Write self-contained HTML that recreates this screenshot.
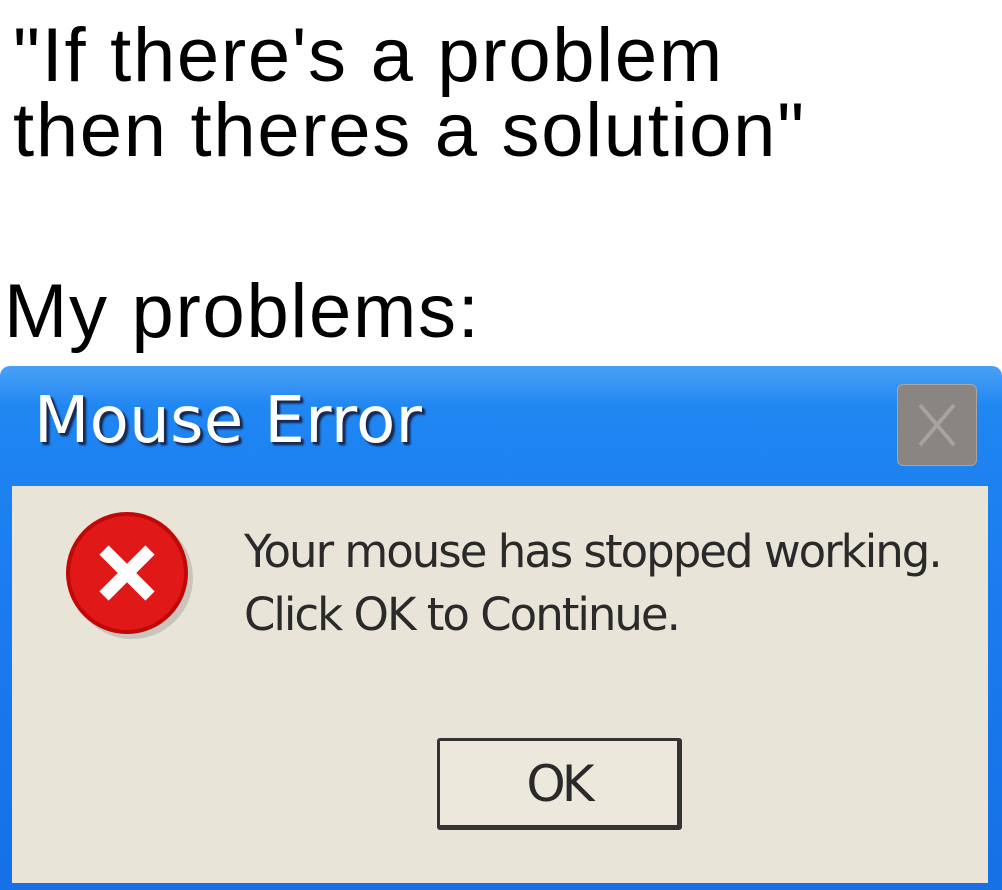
<!DOCTYPE html>
<html><head><meta charset="utf-8"><style>
html,body{margin:0;padding:0;background:#fff;width:1002px;height:890px;overflow:hidden;position:relative}
.t{position:absolute;font-family:"Liberation Sans",sans-serif;color:#000;font-size:76px;line-height:75px;white-space:nowrap;letter-spacing:1.7px}
.win{position:absolute;left:0;top:366px;width:1002px;height:524px;background:linear-gradient(#4aa0f5,#1f86f2 8%,#1a7aee 50%,#1670e6);border-radius:10px 10px 0 0}
.title{position:absolute;left:34px;top:386px;font-family:"DejaVu Sans","Liberation Sans",sans-serif;font-size:64px;line-height:70px;color:#fff;letter-spacing:0.4px;text-shadow:2px 2px 1px #1a2a50,3px 3px 2px #10204a}
.close{position:absolute;left:897px;top:384px;width:78px;height:80px;background:#8a8580;border-radius:6px;border:1px solid #a9a5a0}
.client{position:absolute;left:12px;top:486px;width:976px;height:397px;background:#e9e4d8}
.msg{position:absolute;left:244px;font-family:"DejaVu Sans","Liberation Sans",sans-serif;font-size:45px;line-height:54px;color:#2a2a2a;letter-spacing:-2px;white-space:nowrap}
.ok{position:absolute;left:437px;top:738px;width:245px;height:92px;border:3px solid #333;border-width:3px 5px 5px 3px;border-radius:3px;background:#ece8dc;box-sizing:border-box;text-align:center;font-family:"DejaVu Sans",sans-serif;font-size:50px;line-height:86px;color:#2a2a2a;letter-spacing:-4px}
</style></head><body>
<div class="t" style="left:13px;top:18px">"If there's a problem</div>
<div class="t" style="left:13px;top:93px">then theres a solution"</div>
<div class="t" style="left:4px;top:274px">My problems:</div>
<div class="win"></div>
<div class="title">Mouse Error</div>
<div class="close"><svg width="78" height="80"><path d="M22 20 L56 60 M56 20 L22 60" stroke="#a8a29e" stroke-width="4"/></svg></div>
<div class="client"></div>
<svg style="position:absolute;left:60px;top:508px" width="140" height="135">
<circle cx="72" cy="70" r="61" fill="#a8a8a0" opacity=".5"/>
<circle cx="67" cy="65" r="61" fill="#c00808"/>
<circle cx="67" cy="65" r="57" fill="#e01818"/>
<path d="M44 42 L90 88 M90 42 L44 88" stroke="#fff" stroke-width="13"/>
</svg>
<div class="msg" style="top:525px">Your mouse has stopped working.</div>
<div class="msg" style="top:588px">Click OK to Continue.</div>
<div class="ok">OK</div>
</body></html>
